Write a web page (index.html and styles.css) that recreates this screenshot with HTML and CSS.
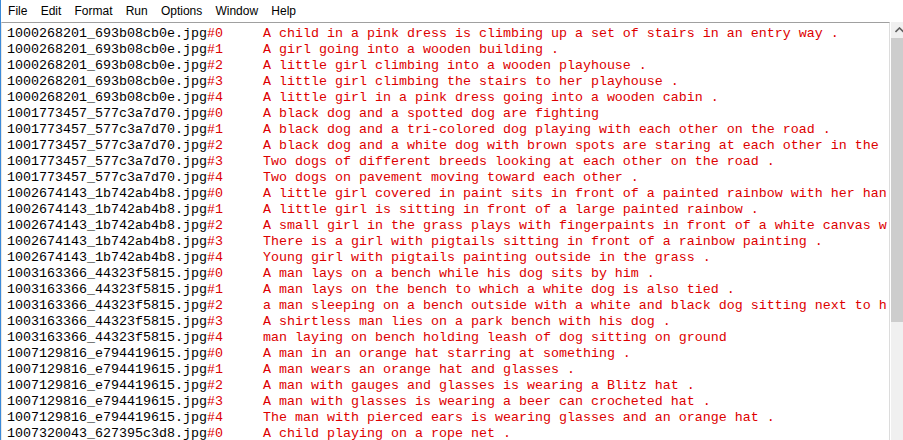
FILE: index.html
```html
<!DOCTYPE html>
<html>
<head>
<meta charset="utf-8">
<link rel="stylesheet" href="styles.css">
</head>
<body>
<div class="window">
  <div class="menubar">
    <span class="menu-item">File</span>
    <span class="menu-item">Edit</span>
    <span class="menu-item">Format</span>
    <span class="menu-item">Run</span>
    <span class="menu-item">Options</span>
    <span class="menu-item">Window</span>
    <span class="menu-item">Help</span>
  </div>
  <div class="editor">
    <div class="text-frame">
      <div class="text"><div class="line">1000268201_693b08cb0e.jpg<span class="c">#0	A child in a pink dress is climbing up a set of stairs in an entry way .</span></div><div class="line">1000268201_693b08cb0e.jpg<span class="c">#1	A girl going into a wooden building .</span></div><div class="line">1000268201_693b08cb0e.jpg<span class="c">#2	A little girl climbing into a wooden playhouse .</span></div><div class="line">1000268201_693b08cb0e.jpg<span class="c">#3	A little girl climbing the stairs to her playhouse .</span></div><div class="line">1000268201_693b08cb0e.jpg<span class="c">#4	A little girl in a pink dress going into a wooden cabin .</span></div><div class="line">1001773457_577c3a7d70.jpg<span class="c">#0	A black dog and a spotted dog are fighting</span></div><div class="line">1001773457_577c3a7d70.jpg<span class="c">#1	A black dog and a tri-colored dog playing with each other on the road .</span></div><div class="line">1001773457_577c3a7d70.jpg<span class="c">#2	A black dog and a white dog with brown spots are staring at each other in the street .</span></div><div class="line">1001773457_577c3a7d70.jpg<span class="c">#3	Two dogs of different breeds looking at each other on the road .</span></div><div class="line">1001773457_577c3a7d70.jpg<span class="c">#4	Two dogs on pavement moving toward each other .</span></div><div class="line">1002674143_1b742ab4b8.jpg<span class="c">#0	A little girl covered in paint sits in front of a painted rainbow with her hands in a bowl .</span></div><div class="line">1002674143_1b742ab4b8.jpg<span class="c">#1	A little girl is sitting in front of a large painted rainbow .</span></div><div class="line">1002674143_1b742ab4b8.jpg<span class="c">#2	A small girl in the grass plays with fingerpaints in front of a white canvas with a rainbow on it .</span></div><div class="line">1002674143_1b742ab4b8.jpg<span class="c">#3	There is a girl with pigtails sitting in front of a rainbow painting .</span></div><div class="line">1002674143_1b742ab4b8.jpg<span class="c">#4	Young girl with pigtails painting outside in the grass .</span></div><div class="line">1003163366_44323f5815.jpg<span class="c">#0	A man lays on a bench while his dog sits by him .</span></div><div class="line">1003163366_44323f5815.jpg<span class="c">#1	A man lays on the bench to which a white dog is also tied .</span></div><div class="line">1003163366_44323f5815.jpg<span class="c">#2	a man sleeping on a bench outside with a white and black dog sitting next to him .</span></div><div class="line">1003163366_44323f5815.jpg<span class="c">#3	A shirtless man lies on a park bench with his dog .</span></div><div class="line">1003163366_44323f5815.jpg<span class="c">#4	man laying on bench holding leash of dog sitting on ground</span></div><div class="line">1007129816_e794419615.jpg<span class="c">#0	A man in an orange hat starring at something .</span></div><div class="line">1007129816_e794419615.jpg<span class="c">#1	A man wears an orange hat and glasses .</span></div><div class="line">1007129816_e794419615.jpg<span class="c">#2	A man with gauges and glasses is wearing a Blitz hat .</span></div><div class="line">1007129816_e794419615.jpg<span class="c">#3	A man with glasses is wearing a beer can crocheted hat .</span></div><div class="line">1007129816_e794419615.jpg<span class="c">#4	The man with pierced ears is wearing glasses and an orange hat .</span></div><div class="line">1007320043_627395c3d8.jpg<span class="c">#0	A child playing on a rope net .</span></div></div>
    </div>
    <div class="scrollbar">
      <div class="scroll-arrow">
        <svg width="9" height="6" viewBox="0 0 9 6"><path d="M0.5 5 L4.5 1 L8.5 5" fill="none" stroke="#606060" stroke-width="1.6"/></svg>
      </div>
      <div class="scroll-thumb"></div>
    </div>
  </div>
</div>
</body>
</html>
```

FILE: styles.css
```css
html, body {
  margin: 0;
  padding: 0;
  background: #ffffff;
}
.window {
  width: 903px;
  height: 440px;
  display: flex;
  flex-direction: column;
  overflow: hidden;
  box-sizing: border-box;
  border-left: 1px solid #3c8ad8;
}
.menubar {
  height: 22px;
  box-sizing: border-box;
  padding-top: 1px;
  display: flex;
  align-items: center;
  padding-left: 0.5px;
  font-family: "Liberation Sans", Arial, sans-serif;
  font-size: 12px;
  color: #000;
  background: #fff;
  flex: none;
}
.menu-item {
  padding: 0 6.6px;
  line-height: 21px;
}
.editor {
  flex: 1;
  display: flex;
  min-height: 0;
}
.text-frame {
  flex: 1;
  min-width: 0;
  border-top: 1px solid #a0a0a0;
  border-left: 1px solid #e8e8e8;
  border-right: 1px solid #dcdcdc;
  padding: 3px 2px 0 5px;
  overflow: hidden;
}
.text {
  overflow: hidden;
  height: 100%;
  font-family: "Liberation Mono", "Courier New", monospace;
  font-size: 13.333px;
  line-height: 16px;
  color: #000;
  white-space: pre;
  tab-size: 8;
}
.line {
  height: 16px;
}
.c {
  color: #dd0000;
}
.scrollbar {
  width: 12px;
  flex: none;
  margin-left: 1px;
  background: #f0f0f0;
  display: flex;
  flex-direction: column;
}
.scroll-arrow {
  height: 16px;
  display: flex;
  justify-content: flex-end;
  align-items: flex-start;
  padding-top: 5px;
  box-sizing: border-box;
}
.scroll-arrow svg {
  display: block;
  margin-right: -1px;
}
.scroll-thumb {
  height: 284px;
  background: #cdcdcd;
}
```
